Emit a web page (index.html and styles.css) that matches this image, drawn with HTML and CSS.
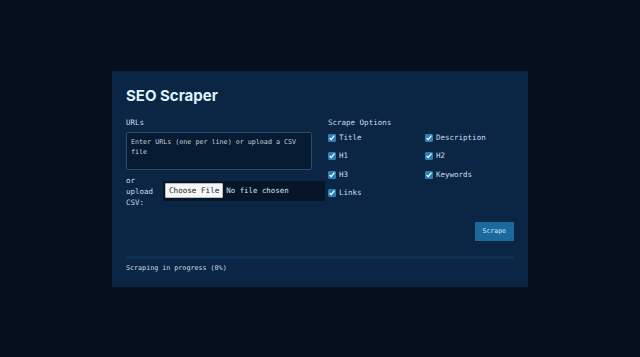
FILE: index.html
```html
<!DOCTYPE html>
<html lang="en">
<head>
    <meta charset="UTF-8">
    <meta name="viewport" content="width=device-width, initial-scale=1.0">
    <title>SEO Scraper</title>
    <link rel="stylesheet" href="styles.css">
</head>
<body>
    <div class="card">
        <h1>SEO Scraper</h1>
        <form id="scrape-form">
            <div class="columns">
                <div class="col">
                    <label class="field-label" for="urls">URLs</label>
                    <textarea id="urls" name="urls" placeholder="Enter URLs (one per line) or upload a CSV file"></textarea>
                    <div class="upload-row">
                        <label class="upload-label" for="csv">or upload CSV:</label>
                        <input type="file" id="csv" name="csv" accept=".csv">
                    </div>
                </div>
                <div class="col">
                    <span class="field-label">Scrape Options</span>
                    <div class="options">
                        <label class="option"><input type="checkbox" checked> Title</label>
                        <label class="option"><input type="checkbox" checked> Description</label>
                        <label class="option"><input type="checkbox" checked> H1</label>
                        <label class="option"><input type="checkbox" checked> H2</label>
                        <label class="option"><input type="checkbox" checked> H3</label>
                        <label class="option"><input type="checkbox" checked> Keywords</label>
                        <label class="option"><input type="checkbox" checked> Links</label>
                    </div>
                </div>
            </div>
            <div class="actions">
                <button type="submit" class="scrape-button">Scrape</button>
            </div>
        </form>
        <div class="progress"><div class="progress-fill" style="width: 0%"></div></div>
        <p class="status">Scraping in progress (0%)</p>
    </div>
</body>
</html>
```

FILE: styles.css
```css
body {
    margin: 0;
    min-height: 100vh;
    display: flex;
    align-items: center;
    justify-content: center;
    background-color: #050f1d;
    font-family: "DejaVu Sans Mono", "Liberation Mono", monospace;
    color: #cddbe8;
}

.card {
    width: 416px;
    box-sizing: border-box;
    padding: 16px 14px 14px;
    background-color: #0a2644;
}

h1 {
    margin: 0 0 13px;
    font-family: Inter, "Liberation Sans", sans-serif;
    font-size: 15px;
    line-height: 18px;
    font-weight: 700;
    color: #dff3ff;
}

.columns {
    display: grid;
    grid-template-columns: 186px 186px;
    column-gap: 16px;
}

.field-label {
    display: block;
    font-size: 7.5px;
    line-height: 10px;
    margin-bottom: 4px;
}

textarea {
    display: block;
    width: 186px;
    height: 38px;
    box-sizing: border-box;
    padding: 4px 4px;
    background-color: #061a31;
    border: 1px solid #2e4c6a;
    border-radius: 2px;
    color: #cddbe8;
    font-family: inherit;
    font-size: 6.7px;
    line-height: 10px;
    resize: none;
}

textarea::placeholder {
    color: #c4d0dc;
    opacity: 1;
}

.upload-row {
    display: flex;
    align-items: center;
    margin-top: 5px;
}

.upload-label {
    width: 32px;
    font-size: 7.5px;
    line-height: 11px;
    flex-shrink: 0;
    margin-right: 5px;
}

input[type="file"] {
    width: 162px;
    height: 20px;
    box-sizing: border-box;
    padding: 2px 2px;
    background-color: #061528;
    color: #d6e2ee;
    font-family: inherit;
    font-size: 7.4px;
    flex-shrink: 0;
}

input[type="file"]::file-selector-button {
    font-family: "DejaVu Sans Mono", "Liberation Mono", monospace;
    font-size: 7.6px;
    height: 15px;
    padding: 0 3px;
    margin-right: 3px;
    background-color: #f6f6f6;
    color: #222;
    border: 1px solid #bbb;
    border-radius: 1px;
}

.options {
    display: grid;
    grid-template-columns: 97px 89px;
    row-gap: 6.5px;
}

.option {
    display: flex;
    align-items: center;
    gap: 3px;
    font-size: 7.5px;
    line-height: 12px;
}

.option input {
    width: 8px;
    height: 8px;
    margin: 0;
    accent-color: #2a7fb4;
}

.actions {
    display: flex;
    justify-content: flex-end;
    margin-top: 14px;
}

.scrape-button {
    height: 19px;
    padding: 0 8px;
    background-color: #1b6a9d;
    color: #dbe9f5;
    border: none;
    font-family: inherit;
    font-size: 6.5px;
    cursor: pointer;
}

.progress {
    height: 3px;
    margin-top: 15px;
    background-color: #0e3253;
}

.progress-fill {
    height: 100%;
    background-color: #2a7fb4;
}

.status {
    margin: 4px 0 0;
    font-size: 6.7px;
    line-height: 10px;
}
```
